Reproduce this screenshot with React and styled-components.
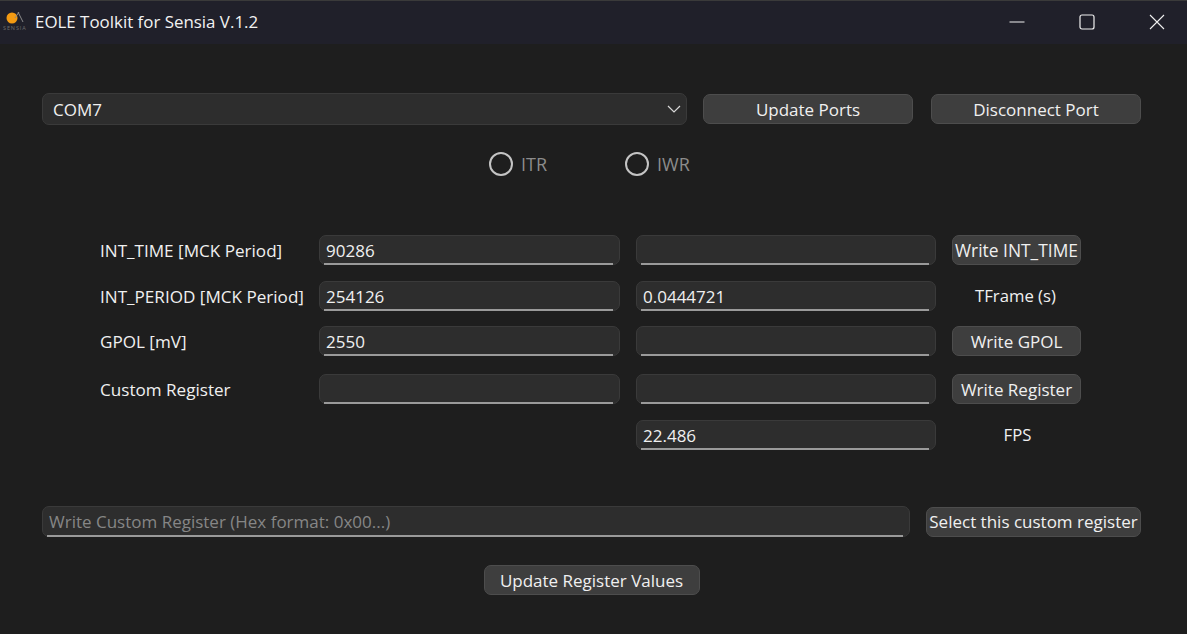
import React from "react";
import styled, { createGlobalStyle } from "styled-components";

const GlobalStyle = createGlobalStyle`
html, body {
  margin: 0;
  padding: 0;
  background: #1e1e1e;
  font-family: "Open Sans", "Noto Sans", sans-serif;
}
`;

const Page = styled.div`
width: 1187px;
height: 634px;
overflow: hidden;
background: #1e1e1e;
color: #f0f0f0;
font-size: 17px;
`;

const TitleBar = styled.div`
height: 43px;
border-top: 1px solid #3a3a3a;
background: #20202a;
display: flex;
align-items: center;
padding-left: 3px;
`;

const Title = styled.div`
margin-left: 6px;
font-size: 16.9px;
color: #f2f2f2;
flex: 1;
margin-top: -3px;
`;

const WinButtons = styled.div`
display: flex;
margin-right: -5px;
flex: none;
`;

const WinButton = styled.div`
width: 70px;
height: 43px;
display: flex;
align-items: center;
justify-content: center;
margin-top: -1px;
`;

const Content = styled.div`
padding: 49px 46px 0 42px;
`;

const TopRow = styled.div`
display: flex;
align-items: center;
`;

const Combo = styled.div`
width: 645px;
height: 32px;
box-sizing: border-box;
background: #2d2d2d;
border: 1px solid #3a3a3a;
border-radius: 7px;
display: flex;
align-items: center;
justify-content: space-between;
padding: 0 4px 0 10px;
`;

const Button = styled.button`
width: ${(p) => p.$w}px;
height: ${(p) => p.$h || 30}px;
margin-left: ${(p) => p.$ml || 0}px;
box-sizing: border-box;
padding: 0;
background: #3e3e3e;
border: 1px solid #4d4d4d;
border-radius: 7px;
color: #f0f0f0;
font-family: inherit;
font-size: ${(p) => p.$fs || 17}px;
white-space: nowrap;
flex: none;
`;

const RadioRow = styled.div`
display: flex;
margin-top: 23px;
padding-left: 447px;
height: 32px;
align-items: center;
font-size: 18px;
`;

const Radio = styled.div`
display: flex;
align-items: center;
width: ${(p) => p.$w}px;
color: #8c8c8c;
`;

const Dot = styled.span`
width: 24px;
height: 24px;
box-sizing: border-box;
border: 2px solid #c4c4c4;
border-radius: 50%;
margin-right: 8px;
`;

const FormRow = styled.div`
display: flex;
align-items: center;
height: 30px;
margin-top: ${(p) => p.$top}px;
`;

const RowLabel = styled.div`
width: 220px;
margin-left: 58px;
font-size: 17.1px;
white-space: nowrap;
flex: none;
`;

const Field = styled.div`
position: relative;
width: ${(p) => p.$w}px;
height: ${(p) => p.$h || 30}px;
margin-left: ${(p) => p.$ml || 0}px;
margin-right: ${(p) => p.$mr || 0}px;
flex: none;

&::after {
  content: "";
  position: absolute;
  left: 5px;
  right: 7px;
  bottom: 0;
  height: 2px;
  background: #9a9a9a;
}
`;

const Spacer = styled.div`
width: 316px;
flex: none;
`;

const Input = styled.input`
display: block;
width: 100%;
height: 100%;
box-sizing: border-box;
background: #2d2d2d;
border: 1px solid #3a3a3a;
border-radius: 7px;
padding: 0 6px;
color: #f0f0f0;
font-family: inherit;
font-size: 17px;
outline: none;

&::placeholder {
  color: #868686;
  opacity: 1;
}
`;

const SideLabel = styled.div`
width: 129px;
margin-left: ${(p) => p.$ml}px;
padding-bottom: 2px;
text-align: center;
font-size: 16.7px;
flex: none;
`;

const CustomRow = styled.div`
display: flex;
align-items: center;
margin-top: 56px;
`;

const BottomRow = styled.div`
display: flex;
justify-content: center;
margin-top: 28px;
`;

const Logo = () => (
  <svg width="26" height="30" viewBox="0 0 26 30">
    <circle cx="9" cy="10" r="5.5" fill="#f39a12" />
    <path d="M15 4 L20 14 M16 4 L12 10" stroke="#8a8a8a" strokeWidth="1" fill="none" />
    <text x="0" y="22" fontSize="5.5" fill="#6d6d6d" letterSpacing="0.9" fontFamily="Open Sans, sans-serif">SENSIA</text>
  </svg>
);

const rows = [
  { label: "INT_TIME [MCK Period]", a: "90286", b: "", btn: "Write INT_TIME", fs: 17.4, top: 55 },
  { label: "INT_PERIOD [MCK Period]", a: "254126", b: "0.0444721", side: "TFrame (s)", top: 16 },
  { label: "GPOL [mV]", a: "2550", b: "", btn: "Write GPOL", top: 15 },
  { label: "Custom Register", a: "", b: "", btn: "Write Register", top: 18 },
];

const App = () => {
  return (
    <Page>
      <GlobalStyle />
      <TitleBar>
        <Logo />
        <Title>EOLE Toolkit for Sensia V.1.2</Title>
        <WinButtons>
          <WinButton>
            <svg width="16" height="16" viewBox="0 0 16 16"><path d="M0.5 8 H15.5" stroke="#f0f0f0" strokeWidth="1" /></svg>
          </WinButton>
          <WinButton>
            <svg width="16" height="16" viewBox="0 0 16 16"><rect x="1" y="1" width="14" height="14" rx="2" fill="none" stroke="#f0f0f0" strokeWidth="1.2" /></svg>
          </WinButton>
          <WinButton>
            <svg width="16" height="16" viewBox="0 0 16 16"><path d="M1 1 L15 15 M15 1 L1 15" stroke="#f0f0f0" strokeWidth="1.1" /></svg>
          </WinButton>
        </WinButtons>
      </TitleBar>
      <Content>
        <TopRow>
          <Combo>
            COM7
            <svg width="16" height="16" viewBox="0 0 16 16"><path d="M2 5 L8 11 L14 5" fill="none" stroke="#d8d8d8" strokeWidth="1.2" /></svg>
          </Combo>
          <Button $w={210} $ml={16}>Update Ports</Button>
          <Button $w={210} $ml={18}>Disconnect Port</Button>
        </TopRow>
        <RadioRow>
          <Radio $w={136}><Dot />ITR</Radio>
          <Radio $w={100}><Dot />IWR</Radio>
        </RadioRow>
        {rows.map((r) => (
          <FormRow key={r.label} $top={r.top}>
            <RowLabel>{r.label}</RowLabel>
            <Field $w={301} $ml={-1} $mr={16}><Input readOnly value={r.a} /></Field>
            <Field $w={300}><Input readOnly value={r.b} /></Field>
            {r.btn ? <Button $w={129} $ml={16} $fs={r.fs}>{r.btn}</Button> : <SideLabel $ml={15}>{r.side}</SideLabel>}
          </FormRow>
        ))}
        <FormRow $top={16}>
          <RowLabel />
          <Spacer />
          <Field $w={300}><Input readOnly value="22.486" /></Field>
          <SideLabel $ml={17}>FPS</SideLabel>
        </FormRow>
        <CustomRow>
          <Field $w={868} $h={31}><Input readOnly placeholder="Write Custom Register (Hex format: 0x00...)" /></Field>
          <Button $w={215} $ml={16}>Select this custom register</Button>
        </CustomRow>
        <BottomRow>
          <Button $w={216}>Update Register Values</Button>
        </BottomRow>
      </Content>
    </Page>
  );
};

export default App;
